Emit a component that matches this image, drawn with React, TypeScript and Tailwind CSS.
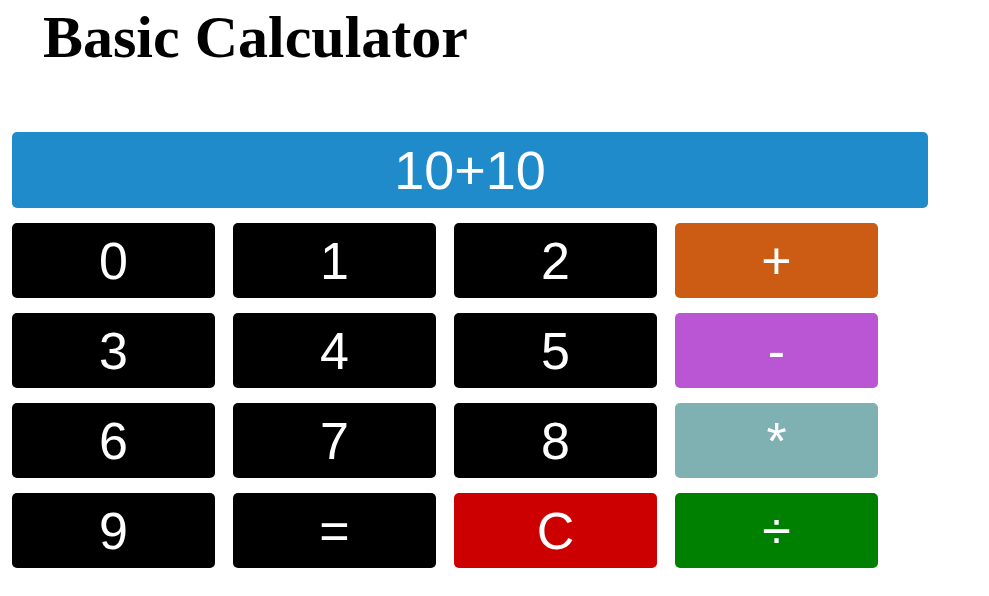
const KEYS = [
  { label: "0", bg: "bg-black" },
  { label: "1", bg: "bg-black" },
  { label: "2", bg: "bg-black" },
  { label: "+", bg: "bg-[#cc5c13]" },
  { label: "3", bg: "bg-black" },
  { label: "4", bg: "bg-black" },
  { label: "5", bg: "bg-black" },
  { label: "-", bg: "bg-[#ba55d3]" },
  { label: "6", bg: "bg-black" },
  { label: "7", bg: "bg-black" },
  { label: "8", bg: "bg-black" },
  { label: "*", bg: "bg-[#7fb1b3]" },
  { label: "9", bg: "bg-black" },
  { label: "=", bg: "bg-black" },
  { label: "C", bg: "bg-[#cc0000]" },
  { label: "÷", bg: "bg-[#008000]" },
];

export default function App() {
  return (
    <div className="min-h-screen bg-white px-[12px] pt-[5px]">
      <h1 className="ml-[31px] h-[127px] text-[60px] leading-[64px] font-bold text-black [font-family:'Liberation_Serif',serif]">
        Basic Calculator
      </h1>

      <div className="[font-family:'Liberation_Sans',Arial,sans-serif]">
        {/* Display */}
        <div className="flex h-[76px] w-[916px] items-center justify-center rounded-[5px] bg-[#208bca] text-[54px] text-white">
          10+10
        </div>

        {/* Keypad */}
        <div className="mt-[15px] grid w-[866px] grid-cols-4 gap-x-[18px] gap-y-[15px]">
          {KEYS.map((k) => (
            <button
              key={k.label}
              className={`flex h-[75px] items-center justify-center rounded-[5px] text-[52px] text-white ${k.bg}`}
            >
              {k.label}
            </button>
          ))}
        </div>
      </div>
    </div>
  );
}
